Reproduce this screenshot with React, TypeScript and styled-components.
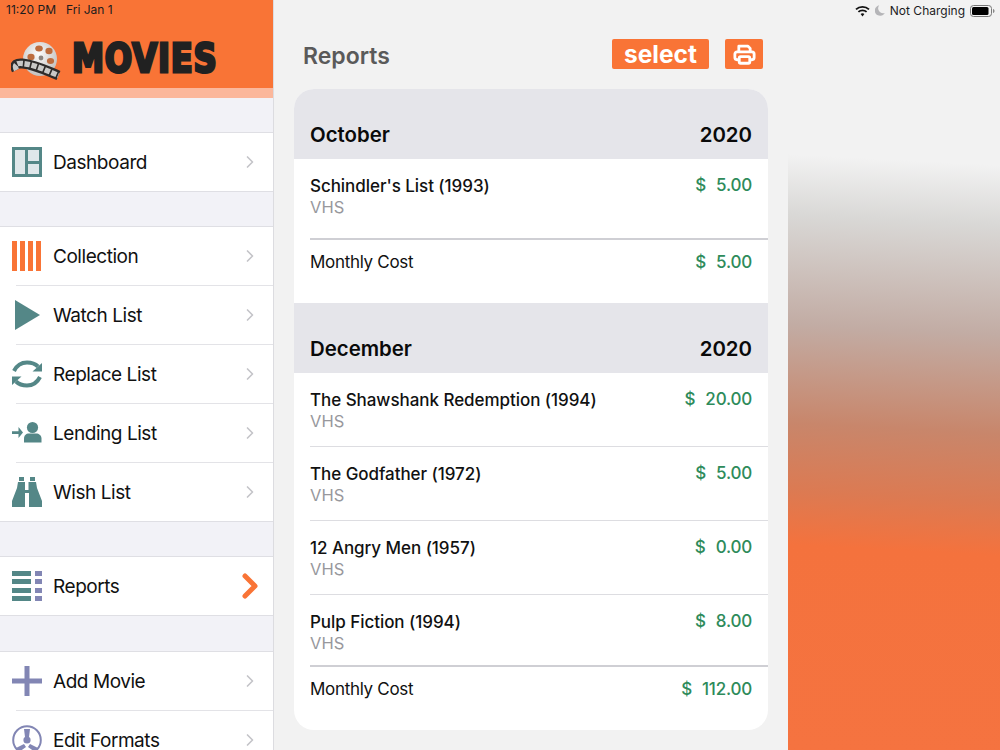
import React from "react";
import styled, { createGlobalStyle } from "styled-components";
import { ChevronRight } from "lucide-react";

const Global = createGlobalStyle`
  html, body { margin: 0; padding: 0; }
  body { font-family: Inter, "Liberation Sans", sans-serif; background: #f2f2f2; }
`;

const Screen = styled.div`
  width: 1000px;
  height: 750px;
  display: flex;
  overflow: hidden;
  background: #f2f2f2;
`;

const Sidebar = styled.aside`
  width: 274px;
  height: 750px;
  flex: none;
  overflow: hidden;
  background: #f2f2f7;
  border-right: 1px solid #dcdce0;
  box-sizing: border-box;
`;

const Brand = styled.header`
  height: 88px;
  background: #f97436;
  display: flex;
  flex-direction: column;
  box-sizing: border-box;
`;

const Clock = styled.div`
  display: flex;
  gap: 10px;
  padding: 3px 0 0 6px;
  height: 21px;
  box-sizing: border-box;
  font-size: 12px;
  line-height: 14px;
  color: #1c1c1e;
`;

const Logo = styled.div`
  display: flex;
  align-items: flex-start;
  padding: 17px 0 0 11px;
`;

const Wordmark = styled.span`
  display: block;
  margin: 4px 0 0 11px;
  width: 145px;
  height: 32px;
  font-family: "DejaVu Sans", sans-serif;
  font-weight: 700;
  font-size: 39.5px;
  line-height: 32px;
  color: #212121;
  -webkit-text-stroke: 3px #212121;
  letter-spacing: 1px;
  transform: scaleX(0.815);
  transform-origin: left center;
  white-space: nowrap;
`;

const Band = styled.div`
  height: 10px;
  background: #fbb79b;
`;

const Group = styled.ul<{ $gap: number }>`
  list-style: none;
  margin: ${(p) => p.$gap}px 0 0;
  padding: 0;
  background: #fff;
  border-top: 1px solid #dfdfe4;
  border-bottom: 1px solid #dfdfe4;
`;

const NavItem = styled.li`
  height: 58px;
  box-sizing: border-box;
  display: flex;
  align-items: center;
  position: relative;
  padding-left: 12px;
  & + & { height: 59px; padding-top: 1px; }
  & + &::after {
    content: "";
    position: absolute;
    top: 0;
    left: 16px;
    right: 0;
    height: 1px;
    background: #e3e3e7;
  }
`;

const IconSlot = styled.span`
  width: 30px;
  height: 30px;
  flex: none;
  display: block;
  svg { display: block; }
`;

const NavLabel = styled.span`
  margin-left: 11px;
  flex: 1;
  font-size: 19px;
  letter-spacing: -0.45px;
  color: #111;
`;

const Arrow = styled.span<{ $active?: boolean }>`
  width: 30px;
  display: flex;
  justify-content: center;
  margin-right: 8px;
  color: ${(p) => (p.$active ? "#f97436" : "#c4c4c8")};
  svg { display: block; flex: none; }
`;

const Main = styled.main`
  width: 514px;
  flex: none;
  display: flex;
  flex-direction: column;
  padding: 0 20px;
  box-sizing: border-box;
`;

const TopBar = styled.div`
  height: 89px;
  display: flex;
  align-items: flex-start;
  padding: 39px 5px 0 9px;
  box-sizing: border-box;
`;

const Title = styled.h1`
  flex: 1;
  margin: 2px 0 0;
  font-size: 23px;
  line-height: 30px;
  font-weight: 600;
  color: #5a5a5a;
`;

const SelectButton = styled.button`
  width: 97px;
  height: 30px;
  border: 0;
  padding: 0;
  border-radius: 2px;
  background: #f97436;
  color: #fff;
  font-family: inherit;
  font-size: 24.5px;
  font-weight: 700;
  line-height: 30px;
`;

const PrintButton = styled.button`
  width: 38px;
  height: 30px;
  margin-left: 16px;
  border: 0;
  padding: 0;
  border-radius: 2px;
  background: #f97436;
  display: flex;
  align-items: center;
  justify-content: center;
`;

const Card = styled.section`
  width: 474px;
  height: 641px;
  border-radius: 20px;
  overflow: hidden;
  background: #fff;
`;

const MonthHead = styled.div`
  height: 70px;
  padding: 0 16px 10px;
  box-sizing: border-box;
  background: #e5e5ea;
  display: flex;
  align-items: flex-end;
  justify-content: space-between;
  font-size: 20.4px;
  line-height: 28px;
  font-weight: 600;
  color: #0a0a0a;
`;

const Money = styled.div`
  display: flex;
  gap: 10px;
  font-size: 17px;
  letter-spacing: -0.2px;
  line-height: 24px;
  font-weight: 500;
  color: #2e8b5b;
`;

const Entry = styled.div<{ $h: number; $rule?: boolean }>`
  height: ${(p) => p.$h}px;
  box-sizing: border-box;
  margin-left: 16px;
  padding: 15px 16px 0 0;
  display: flex;
  justify-content: space-between;
  border-bottom: 1px solid ${(p) => (p.$rule ? "transparent" : "#dddde1")};
  ${Money} { margin-top: -1px; }
`;

const Movie = styled.div`
  font-size: 17px;
  line-height: 24px;
  font-weight: 500;
  letter-spacing: -0.05px;
  color: #111;
`;

const Format = styled.div`
  font-size: 16.5px;
  line-height: 18px;
  color: #98989d;
`;

const Total = styled.div<{ $h: number }>`
  height: ${(p) => p.$h}px;
  box-sizing: border-box;
  margin-left: 16px;
  padding: 10px 16px 0 0;
  border-top: 2px solid #cfcfd4;
  display: flex;
  justify-content: space-between;
  font-size: 17px;
  letter-spacing: -0.3px;
  line-height: 24px;
  color: #111;
`;

const Side = styled.div`
  flex: 1;
  height: 750px;
  background: linear-gradient(
    183deg,
    #f2f2f2 21.7%,
    #d9d8d6 29.6%,
    #c2aca4 44%,
    #c8866b 57%,
    #dc7a52 66%,
    #f4723d 73%,
    #f57340 100%
  );
`;

const Status = styled.div`
  height: 21px;
  display: flex;
  align-items: center;
  justify-content: flex-end;
  gap: 5px;
  padding-right: 5px;
  font-size: 12px;
  color: #1c1c1e;
  svg { display: block; }
`;

const Dashboard = () => (
  <svg width="30" height="30" viewBox="0 0 30 30">
    <path fill="#548787" fillRule="evenodd" d="M0 0h30v30H0zM3 3v24h10V3zm13 0v11h11V3zm0 14v10h11V17z" />
    <path fill="#dfe7ea" d="M3 3h10v24H3zM16 3h11v11H16zM16 17h11v10H16z" />
  </svg>
);
const Collection = () => (
  <svg width="30" height="30" viewBox="0 0 30 30">
    <path fill="#f97436" d="M0 0h5v30H0zM8 0h5v30H8zM16 0h5v30h-5zM24 0h5v30h-5z" />
  </svg>
);
const Play = () => (
  <svg width="30" height="30" viewBox="0 0 30 30">
    <path fill="#548787" d="M3 0l25 15L3 30z" />
  </svg>
);
const Replace = () => (
  <svg width="30" height="30" viewBox="0 0 30 30">
    <g fill="none" stroke="#548787" strokeWidth="4">
      <path d="M2 12C5 6 10 3.500 15 3.500c5 0 8 1 11 4" />
      <path d="M28 18c-3 6-8 8.500-13 8.500-5 0-8-1-11-4" />
    </g>
    <path fill="#548787" d="M30 4v8.500h-9.500zM0 26v-8.500h9.500z" />
  </svg>
);
const Lending = () => (
  <svg width="30" height="30" viewBox="0 0 30 30">
    <path fill="#548787" d="M0 13.200h6.500V9l4.500 5.500-4.500 5.500v-4H0z" />
    <circle fill="#548787" cx="20.500" cy="9.500" r="5.600" />
    <path fill="#548787" d="M12 24.500v-4c0-3 2-5 5-5h7c3 0 5.500 2 5.500 5v4z" />
  </svg>
);
const Binoculars = () => (
  <svg width="30" height="30" viewBox="0 0 30 30">
    <path fill="#548787" d="M7 0h5v4H7zM18 0h5v4h-5zM6 5h7v8h3.500V5H24l1 6 5 13v6H17V16h-4v14H0v-6l5-13z" />
  </svg>
);
const ReportsIcon = () => (
  <svg width="30" height="30" viewBox="0 0 30 30">
    <path fill="#548787" d="M0 0h19v5H0zM0 8h19v5H0zM0 17h19v5H0zM0 25h19v5H0z" />
    <path fill="#8286b4" d="M23 0h7v5h-7zM23 8h7v5h-7zM23 17h7v5h-7zM23 25h7v5h-7z" />
  </svg>
);
const Plus = () => (
  <svg width="30" height="30" viewBox="0 0 30 30">
    <path fill="#8286b4" d="M12.500 0h5v12.500H30v5H17.500V30h-5V17.500H0v-5h12.500z" />
  </svg>
);
const Reel = () => (
  <svg width="30" height="30" viewBox="0 0 30 30">
    <circle cx="15" cy="15" r="13.800" fill="#fff" stroke="#8286b4" strokeWidth="2" />
    <circle cx="15" cy="15" r="3.600" fill="#8286b4" />
    <path fill="#8286b4" d="M12 4h6l-1 8h-4zM26 23l-3 4-7-5 2-3zM4 23l3 4 7-5-2-3z" />
  </svg>
);

const FilmReel = () => (
  <svg width="50" height="44" viewBox="0 0 50 44">
    <defs>
      <radialGradient id="reelFace" cx="45%" cy="35%" r="70%">
        <stop offset="0" stopColor="#fdfdfd" />
        <stop offset="1" stopColor="#bdbbb9" />
      </radialGradient>
    </defs>
    <circle cx="29" cy="21" r="17" fill="url(#reelFace)" />
    <circle cx="30" cy="20" r="2.400" fill="#8b8580" />
    <g fill="#bd6c3e">
      <ellipse cx="28" cy="10.500" rx="3.800" ry="3" />
      <ellipse cx="38" cy="13" rx="3.600" ry="3.200" />
      <ellipse cx="39.500" cy="23" rx="3.600" ry="3" />
      <ellipse cx="20" cy="19" rx="3.600" ry="3.200" />
    </g>
    <path fill="none" stroke="#2e2c2b" strokeWidth="10" d="M5.500 32c-3-6 1-7 6-6.500 12 1 24 7 36 12" />
    <path fill="none" stroke="#c9c9c7" strokeWidth="5.400" strokeDasharray="5.500 1.600" d="M5.500 32c-3-6 1-7 6-6.500 12 1 24 7 36 12" />
  </svg>
);

const Wifi = () => (
  <svg width="15" height="12" viewBox="0 0 15 12">
    <g fill="none" stroke="#111" strokeWidth="1.800">
      <path d="M1 4.400c3.600-3.400 9.400-3.400 13 0" />
      <path d="M3.400 6.900c2.300-2.100 5.900-2.100 8.200 0" />
    </g>
    <path fill="#111" d="M5.600 9c1.100-1 2.700-1 3.800 0l-1.900 2.400z" />
  </svg>
);
const Moon = () => (
  <svg width="10" height="11" viewBox="0 0 10 11">
    <path fill="#b5b5b8" d="M4.200.3A5.300 5.300 0 1 0 9.800 8 5 5 0 0 1 4.200.3z" />
  </svg>
);
const Battery = () => (
  <svg width="25" height="12" viewBox="0 0 25 12">
    <rect x=".5" y=".5" width="21" height="11" rx="3" fill="none" stroke="#777" />
    <rect x="2" y="2" width="16.500" height="8" rx="1.500" fill="#000" />
    <path fill="#888" d="M23 4c1 .3 1.500 1 1.500 2S24 7.700 23 8z" />
  </svg>
);
const Printer = () => (
  <svg width="23" height="21" viewBox="0 0 26 24">
    <g fill="none" stroke="#fff" strokeWidth="3.200" strokeLinejoin="round">
      <path d="M6.500 9V2.500h10.500l2.500 2.500V9" />
      <path d="M6 18H4.500A2.500 2.500 0 0 1 2 15.500v-4A2.500 2.500 0 0 1 4.500 9h17a2.500 2.500 0 0 1 2.500 2.500v4a2.500 2.500 0 0 1-2.500 2.500H20" />
      <rect x="7" y="14.500" width="12" height="7.500" rx="1.500" />
    </g>
  </svg>
);

type Nav = { label: string; icon: React.ReactNode; active?: boolean };
const groups: { gap: number; items: Nav[] }[] = [
  { gap: 34, items: [{ label: "Dashboard", icon: <Dashboard /> }] },
  {
    gap: 34,
    items: [
      { label: "Collection", icon: <Collection /> },
      { label: "Watch List", icon: <Play /> },
      { label: "Replace List", icon: <Replace /> },
      { label: "Lending List", icon: <Lending /> },
      { label: "Wish List", icon: <Binoculars /> },
    ],
  },
  { gap: 34, items: [{ label: "Reports", icon: <ReportsIcon />, active: true }] },
  {
    gap: 35,
    items: [
      { label: "Add Movie", icon: <Plus /> },
      { label: "Edit Formats", icon: <Reel /> },
    ],
  },
];

type Row = { title: string; price: string; h: number; last?: boolean };
const months: { month: string; year: string; rows: Row[]; total: string; totalH: number }[] = [
  {
    month: "October",
    year: "2020",
    rows: [{ title: "Schindler's List (1993)", price: "5.00", h: 79, last: true }],
    total: "5.00",
    totalH: 65,
  },
  {
    month: "December",
    year: "2020",
    rows: [
      { title: "The Shawshank Redemption (1994)", price: "20.00", h: 74 },
      { title: "The Godfather (1972)", price: "5.00", h: 74 },
      { title: "12 Angry Men (1957)", price: "0.00", h: 74 },
      { title: "Pulp Fiction (1994)", price: "8.00", h: 70, last: true },
    ],
    total: "112.00",
    totalH: 65,
  },
];

const Price = ({ value }: { value: string }) => (
  <Money>
    <span>$</span>
    <span>{value}</span>
  </Money>
);

export default function App() {
  return (
    <Screen>
      <Global />
      <Sidebar>
        <Brand>
          <Clock>
            <span>11:20 PM</span>
            <span>Fri Jan 1</span>
          </Clock>
          <Logo>
            <FilmReel />
            <Wordmark>MOVIES</Wordmark>
          </Logo>
        </Brand>
        <Band />
        {groups.map((g, i) => (
          <Group key={i} $gap={g.gap}>
            {g.items.map((n) => (
              <NavItem key={n.label}>
                <IconSlot>{n.icon}</IconSlot>
                <NavLabel>{n.label}</NavLabel>
                <Arrow $active={n.active}>
                  <ChevronRight size={n.active ? 40 : 20} strokeWidth={n.active ? 3 : 2} />
                </Arrow>
              </NavItem>
            ))}
          </Group>
        ))}
      </Sidebar>
      <Main>
        <TopBar>
          <Title>Reports</Title>
          <SelectButton>select</SelectButton>
          <PrintButton aria-label="Print">
            <Printer />
          </PrintButton>
        </TopBar>
        <Card>
          {months.map((m) => (
            <React.Fragment key={m.month}>
              <MonthHead>
                <span>{m.month}</span>
                <span>{m.year}</span>
              </MonthHead>
              {m.rows.map((r) => (
                <Entry key={r.title} $h={r.h} $rule={r.last}>
                  <div>
                    <Movie>{r.title}</Movie>
                    <Format>VHS</Format>
                  </div>
                  <Price value={r.price} />
                </Entry>
              ))}
              <Total $h={m.totalH}>
                <span>Monthly Cost</span>
                <Price value={m.total} />
              </Total>
            </React.Fragment>
          ))}
        </Card>
      </Main>
      <Side>
        <Status>
          <Wifi />
          <Moon />
          <span>Not Charging</span>
          <Battery />
        </Status>
      </Side>
    </Screen>
  );
}
